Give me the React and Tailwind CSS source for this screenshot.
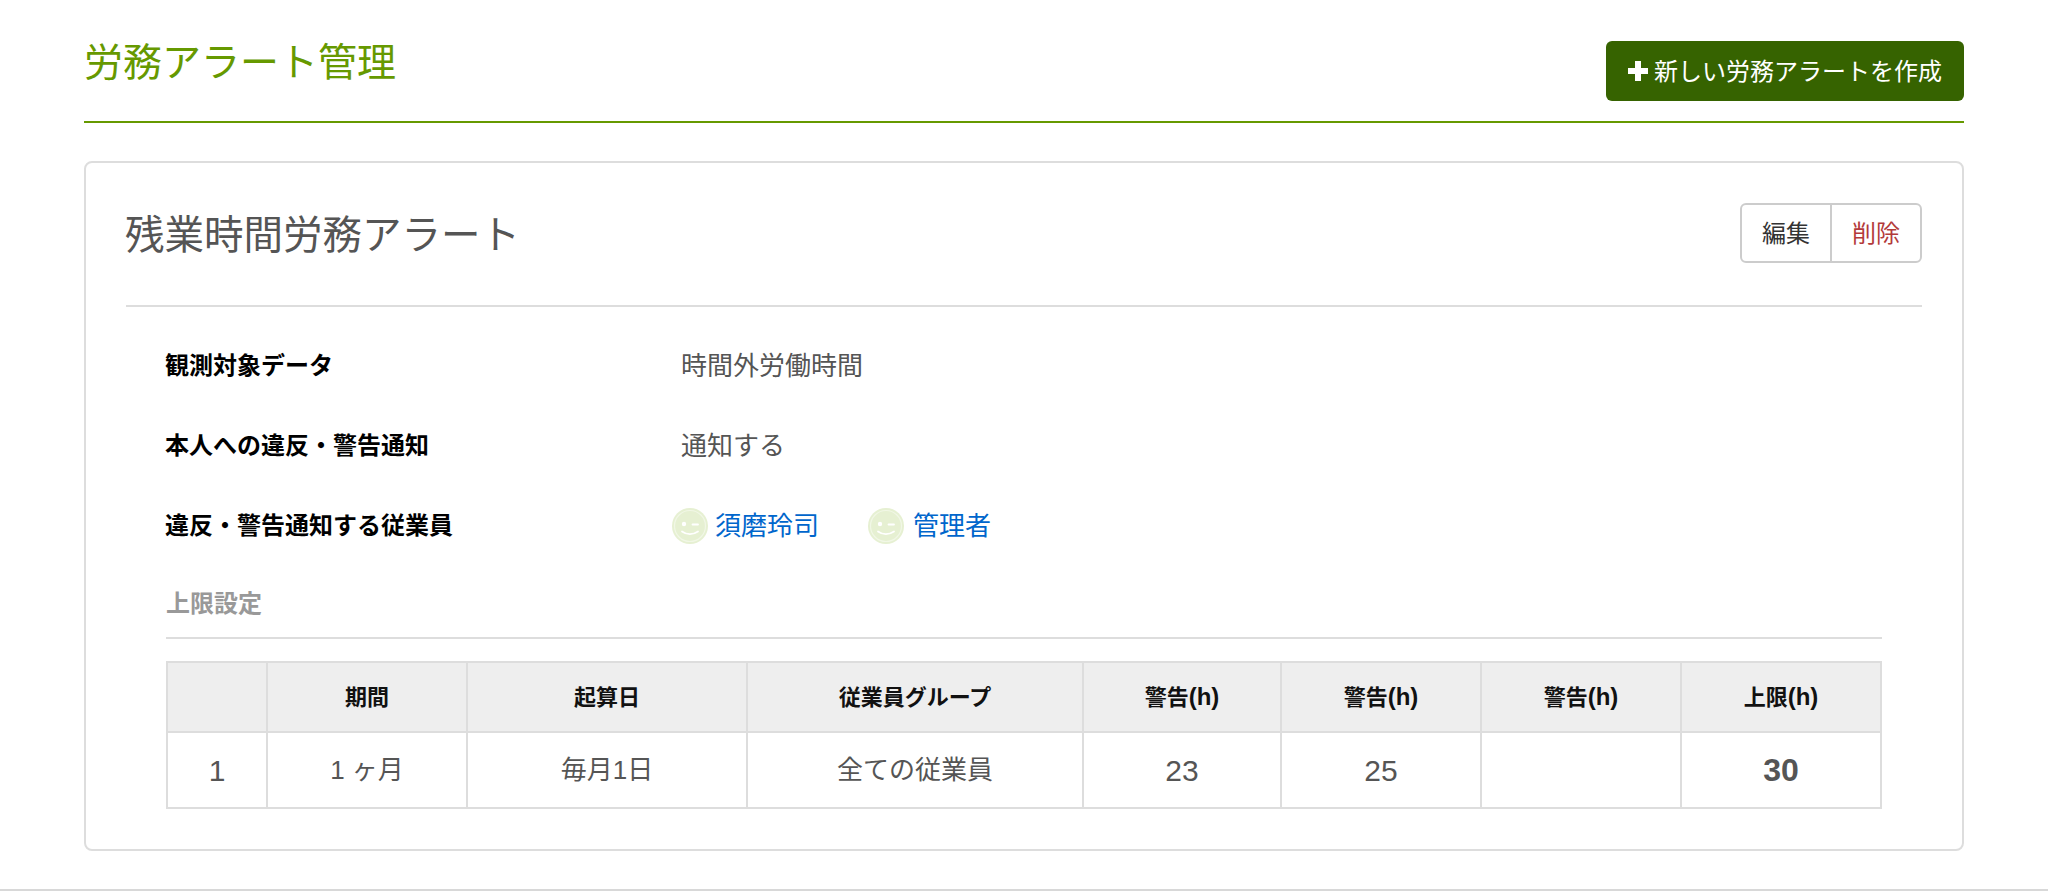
function Avatar() {
  return (
    <svg width="36" height="36" viewBox="0 0 36 36" className="shrink-0">
      <circle cx="18" cy="18" r="18" fill="#e6f0d2" />
      <circle cx="18" cy="18" r="15.5" fill="none" stroke="#f1f7e6" strokeWidth="1.2" />
      <circle cx="12" cy="16" r="2.2" fill="#ffffff" />
      <path d="M20.500 16.500h5.500" stroke="#ffffff" strokeWidth="1.800" strokeLinecap="round" fill="none" />
      <path d="M10 23.500c4.800 3.300 11 3.300 16 0" stroke="#ffffff" strokeWidth="1.800" strokeLinecap="round" fill="none" />
    </svg>
  );
}

function Row({ label, children, className }) {
  return (
    <div className={"flex items-center h-[36px] " + className}>
      <div className="w-[555px] pl-[39px] text-[24px] font-bold text-black leading-[36px]">{label}</div>
      <div className="flex items-center text-[26px] text-[#555555] leading-[36px]">{children}</div>
    </div>
  );
}

function Th({ w, label, unit }) {
  return (
    <th className={w + " border-2 border-[#dddddd] text-[22px] font-bold text-[#111111]"}>
      {label}
      {unit && <span className="text-[24px]">{unit}</span>}
    </th>
  );
}

function Td({ big, bold, children }) {
  return (
    <td className={"border-2 border-[#dddddd] text-center text-[#555555] " + (bold ? "text-[32px] font-bold" : big ? "text-[30px]" : "text-[26px]")}>
      {children}
    </td>
  );
}

export default function App() {
  return (
    <div className="min-h-[896px] bg-white font-['Liberation_Sans','Noto_Sans_CJK_JP',sans-serif]">
      <div className="px-[84px]">
        <header className="flex justify-between h-[123px] border-b-2 border-[#669900]">
          <h1 className="mt-[40px] text-[39px] leading-[46px] font-normal text-[#669900]">労務アラート管理</h1>
          <button className="mt-[41px] h-[60px] w-[358px] flex items-center justify-center gap-[6px] rounded-[6px] bg-[#366300] text-white text-[24px]">
            <svg width="20" height="20" viewBox="0 0 20 20"><path d="M7 0h6v7h7v6h-7v7h-6v-7h-7v-6h7z" fill="#ffffff" /></svg>
            <span className="pt-[2px]">新しい労務アラートを作成</span>
          </button>
        </header>

        <section className="mt-[38px] h-[690px] rounded-[8px] border-2 border-[#dddddd] px-[40px]">
          <div className="flex justify-between h-[144px] border-b-2 border-[#dddddd]">
            <h2 className="mt-[48px] -ml-[1px] text-[39.500px] leading-[48px] font-normal text-[#555555]">残業時間労務アラート</h2>
            <div className="mt-[40px] flex h-[60px] rounded-[6px] border-2 border-[#cccccc] text-[24px]">
              <button className="w-[90px] pt-[2px] text-[#333333] border-r-2 border-[#cccccc]">編集</button>
              <button className="w-[88px] pt-[2px] text-[#b33a3a]">削除</button>
            </div>
          </div>

          <Row label="観測対象データ" className="mt-[41px]">時間外労働時間</Row>
          <Row label="本人への違反・警告通知" className="mt-[44px]">通知する</Row>
          <Row label="違反・警告通知する従業員" className="mt-[44px]">
            <div className="flex items-center -ml-[9px]">
              <Avatar />
              <a className="ml-[7px] text-[#0066cc] mr-[49px]">須磨玲司</a>
              <Avatar />
              <a className="ml-[9px] text-[#0066cc]">管理者</a>
            </div>
          </Row>

          <div className="mx-[40px] mt-[43px] h-[52px] border-b-2 border-[#dddddd] text-[24px] leading-[34px] font-bold text-[#999999]">上限設定</div>

          <table className="ml-[40px] mt-[22px] w-[1714px] table-fixed border-collapse">
            <thead>
              <tr className="h-[70px] bg-[#eeeeee]">
                <Th w="w-[100px]" label="" />
                <Th w="w-[200px]" label="期間" />
                <Th w="w-[280px]" label="起算日" />
                <Th w="w-[336px]" label="従業員グループ" />
                <Th w="w-[198px]" label="警告" unit="(h)" />
                <Th w="w-[200px]" label="警告" unit="(h)" />
                <Th w="w-[200px]" label="警告" unit="(h)" />
                <Th w="w-[200px]" label="上限" unit="(h)" />
              </tr>
            </thead>
            <tbody>
              <tr className="h-[76px]">
                <Td big>1</Td>
                <Td>1 ヶ月</Td>
                <Td>毎月1日</Td>
                <Td>全ての従業員</Td>
                <Td big>23</Td>
                <Td big>25</Td>
                <Td></Td>
                <Td bold>30</Td>
              </tr>
            </tbody>
          </table>
        </section>
      </div>
      <div className="mt-[38px] border-t-2 border-[#d8d8d8]" />
    </div>
  );
}
